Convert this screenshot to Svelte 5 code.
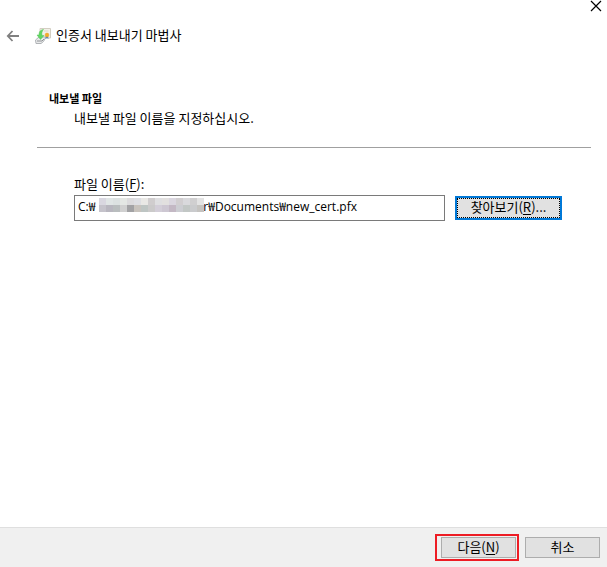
<script>
  // em spaces keep room in the path for the hidden user folder
  const hidden = '\u2003'.repeat(9);
  let fileName = `C:₩${hidden}r₩Documents₩new_cert.pfx`;

  const mosaic = [
    ['#d9d7e0', '#e0e5e5', '#dce1e1', '#e4e7e4', '#dcdbdd', '#dedfe3', '#e9e8e5', '#d0cdce', '#dfdfe1', '#e2e0df', '#dad6df', '#d1ced0', '#d9d9dc', '#d0cfd0', '#e3e3e3'],
    ['#c5c3cb', '#b8b6bf', '#b9bdbe', '#d0d0d0', '#a2a2a4', '#c8c3bd', '#bec5c3', '#cbcaca', '#d3ced8', '#cdc7d2', '#c3b8c4', '#cccdd2', '#c2c7c5', '#cacbcd', '#c5c3c0'],
  ];
</script>

<svelte:head>
  <title>인증서 내보내기 마법사</title>
</svelte:head>

<div class="wizard">
  <div class="titlebar">
    <button class="icon-button" aria-label="닫기">
      <svg width="12" height="12" viewBox="0 0 12 12">
        <path d="M1 1l10 10M11 1L1 11" fill="none" stroke="#000" stroke-width="1.2" />
      </svg>
    </button>
  </div>

  <header>
    <button class="icon-button" aria-label="뒤로">
      <svg width="14" height="14" viewBox="0 0 14 14">
        <path d="M13 7H2M6.500 2L1.800 7l4.700 5" fill="none" stroke="#808080" stroke-width="1.800" />
      </svg>
    </button>
    <svg class="cert" width="16" height="16" viewBox="0 0 16 16" aria-hidden="true">
      <path d="M5 0.500h10.500v9.500H5z" fill="#f3f0e8" stroke="#d3cec2" />
      <path d="M9 3h4.500" stroke="#ddd8cb" />
      <path d="M0.500 12l3.500-3h7l-2.500 4.500-2.500 2H1z" fill="#e9eaeb" stroke="#b0b3b6" />
      <path d="M2 13h5l2-2" fill="none" stroke="#8f9295" />
      <path d="M8.500 1.500C5 2 4 4 4 7H2l3.500 4.500L9 7.500H7C6.500 5 7 3 8.500 1.500z" fill="#62d662" stroke="#55c45a" stroke-width="0.500" />
      <path d="M11 8l-.5 3 1.500-1 1.500 1L13 8z" fill="#5687bd" />
      <circle cx="12" cy="7" r="1.900" fill="#f4ad25" stroke="#e29a28" stroke-width="0.500" />
    </svg>
    <h1>인증서 내보내기 마법사</h1>
  </header>

  <main>
    <section class="intro">
      <h2>내보낼 파일</h2>
      <p>내보낼 파일 이름을 지정하십시오.</p>
    </section>

    <section class="file">
      <label for="file-name">파일 이름(<u>F</u>):</label>
      <div class="file-row">
        <div class="path">
          <input id="file-name" type="text" bind:value={fileName} />
          <svg class="mosaic" width="105" height="14" shape-rendering="crispEdges" aria-hidden="true">
            {#each mosaic as row, y}
              {#each row as color, x}
                <rect x={x * 7} y={y * 7} width="7" height="7" fill={color} />
              {/each}
            {/each}
          </svg>
        </div>
        <button class="button browse">찾아보기(<u>R</u>)...</button>
      </div>
    </section>
  </main>

  <footer>
    <div class="marked">
      <button class="button">다음(<u>N</u>)</button>
    </div>
    <button class="button">취소</button>
  </footer>
</div>

<style>
  :global(body) {
    margin: 0;
    background: #fff;
  }

  .wizard {
    display: flex;
    flex-direction: column;
    min-height: 100vh;
    font-family: "Noto Sans CJK KR", sans-serif;
    font-size: 13px;
    line-height: 20px;
    color: #000;
  }

  .icon-button {
    display: flex;
    padding: 0;
    border: none;
    background: none;
  }

  .titlebar {
    display: flex;
    justify-content: flex-end;
    padding: 0 5px 0 0;
  }

  header {
    display: flex;
    align-items: center;
    padding: 13px 6px 0;
  }

  .cert {
    margin: 0 5px 0 15px;
  }

  h1 {
    margin: 0;
    padding-bottom: 2px;
    font-size: 13px;
    font-weight: 400;
  }

  main {
    flex: 1;
    padding: 41px 16px 0 37px;
  }

  .intro {
    padding: 0 12px 19px;
    border-bottom: 1px solid #a0a0a0;
  }

  h2 {
    margin: 0;
    font-size: 11px;
    font-weight: 700;
  }

  .intro p {
    margin: 0 0 0 25px;
  }

  .file {
    padding: 26px 29px 0 37px;
  }

  label {
    display: block;
    margin-bottom: 1px;
  }

  u {
    text-underline-offset: 2px;
  }

  .file-row {
    display: flex;
    align-items: center;
    gap: 10px;
  }

  .path {
    position: relative;
    flex: 1;
  }

  input {
    display: block;
    box-sizing: border-box;
    width: 100%;
    height: 26px;
    padding: 0 3px 4px;
    border: 1px solid #7a7a7a;
    font-family: "Open Sans", "Noto Sans CJK KR", sans-serif;
    font-size: 12px;
    color: inherit;
  }

  .mosaic {
    position: absolute;
    top: 3px;
    left: 25px;
  }

  .button {
    box-sizing: border-box;
    width: 75px;
    height: 21px;
    padding: 0 0 1px;
    border: 1px solid #adadad;
    background: #e1e1e1;
    font: inherit;
    line-height: 18px;
    color: inherit;
  }

  .browse {
    width: 107px;
    height: 24px;
    padding: 0 0 2px;
    border: 2px solid #0078d7;
    outline: 1px dotted #000;
    outline-offset: -3px;
  }

  footer {
    display: flex;
    justify-content: flex-end;
    align-items: center;
    gap: 6px;
    padding: 6px 7px;
    border-top: 1px solid #dfdfdf;
    background: #f0f0f0;
  }

  .marked {
    display: flex;
    padding: 1px 1px 1px 4px;
    border: 2px solid #ed1c24;
  }
</style>
